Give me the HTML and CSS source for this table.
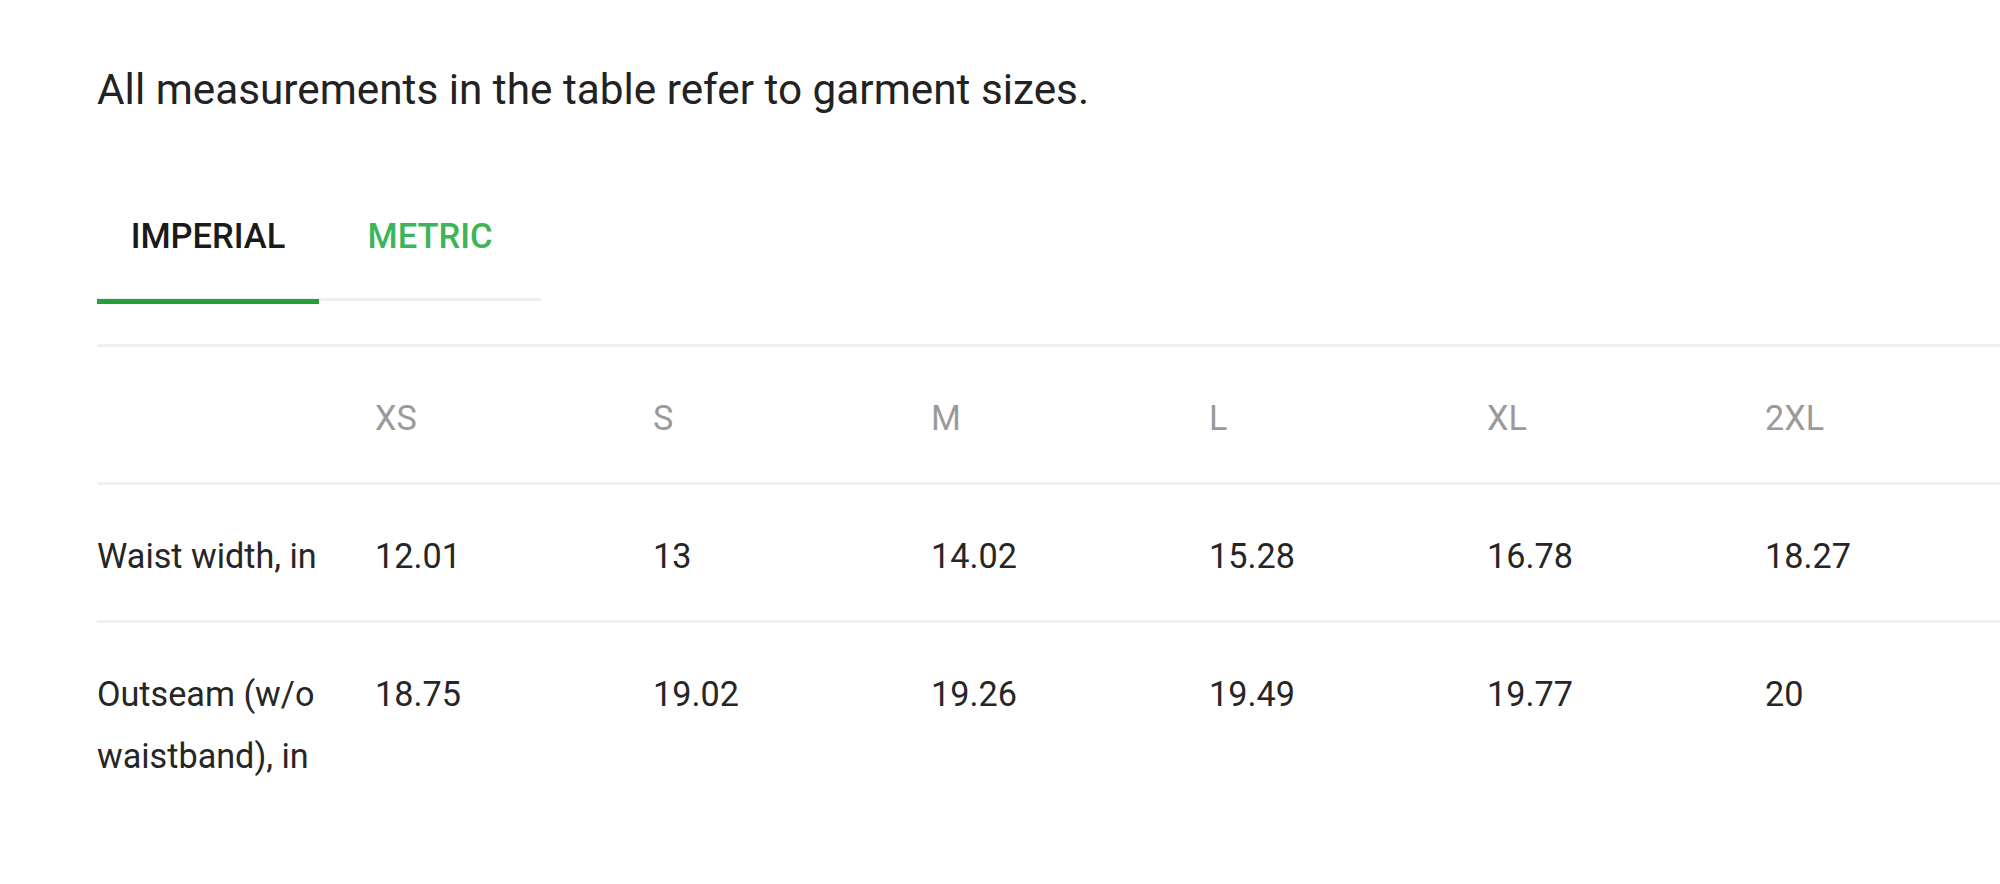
FILE: index.html
```
<!DOCTYPE html>
<html lang="en">
<head>
<meta charset="utf-8">
<title>Size chart</title>
<link rel="stylesheet" href="styles.css">
</head>
<body>
<div class="page">
  <p class="intro">All measurements in the table refer to garment sizes.</p>
  <div class="tabs">
    <div class="tab tab-active">IMPERIAL</div>
    <div class="tab">METRIC</div>
  </div>
  <div class="table-wrap">
    <table class="sizes">
      <thead>
        <tr>
          <th></th>
          <th>XS</th>
          <th>S</th>
          <th>M</th>
          <th>L</th>
          <th>XL</th>
          <th>2XL</th>
          <th></th>
        </tr>
      </thead>
      <tbody>
        <tr>
          <td class="label">Waist width, in</td>
          <td>12.01</td>
          <td>13</td>
          <td>14.02</td>
          <td>15.28</td>
          <td>16.78</td>
          <td>18.27</td>
          <td></td>
        </tr>
        <tr>
          <td class="label">Outseam (w/o waistband), in</td>
          <td>18.75</td>
          <td>19.02</td>
          <td>19.26</td>
          <td>19.49</td>
          <td>19.77</td>
          <td>20</td>
          <td></td>
        </tr>
      </tbody>
    </table>
  </div>
</div>
</body>
</html>
```

FILE: styles.css
```
html, body {
  margin: 0;
  padding: 0;
  background: #ffffff;
}

body {
  font-family: Roboto, "Liberation Sans", Arial, sans-serif;
  color: #212121;
  overflow: hidden;
}

.page {
  padding: 60px 0 0 97px;
}

.intro {
  margin: 0;
  font-size: 42.3px;
  line-height: 60px;
  color: #222222;
}

.tabs {
  display: flex;
  width: 444px;
  margin-top: 53px;
  border-bottom: 3px solid #eeeeee;
}

.tab {
  width: 222px;
  box-sizing: border-box;
  padding: 43px 0 43px;
  margin-bottom: -6px;
  border-bottom: 5px solid transparent;
  text-align: center;
  font-size: 34.5px;
  line-height: 40px;
  font-weight: 500;
  color: #3cb45a;
}

.tab-active {
  color: #1a1a1a;
  border-bottom-color: #23a03d;
}

.table-wrap {
  margin-top: 43px;
  overflow: hidden;
}

.sizes {
  border-collapse: collapse;
  table-layout: fixed;
  width: 2224px;
}

.sizes th,
.sizes td {
  width: 278px;
  padding: 40px 0 33px;
  text-align: left;
  vertical-align: top;
  font-size: 34.2px;
  line-height: 62px;
}

.sizes tr {
  border-top: 3px solid #f1f1f1;
}

.sizes th {
  font-weight: 400;
  color: #9a9a9a;
}

.sizes td {
  color: #262626;
}

.sizes td.label {
  padding-right: 20px;
  box-sizing: border-box;
}
```
